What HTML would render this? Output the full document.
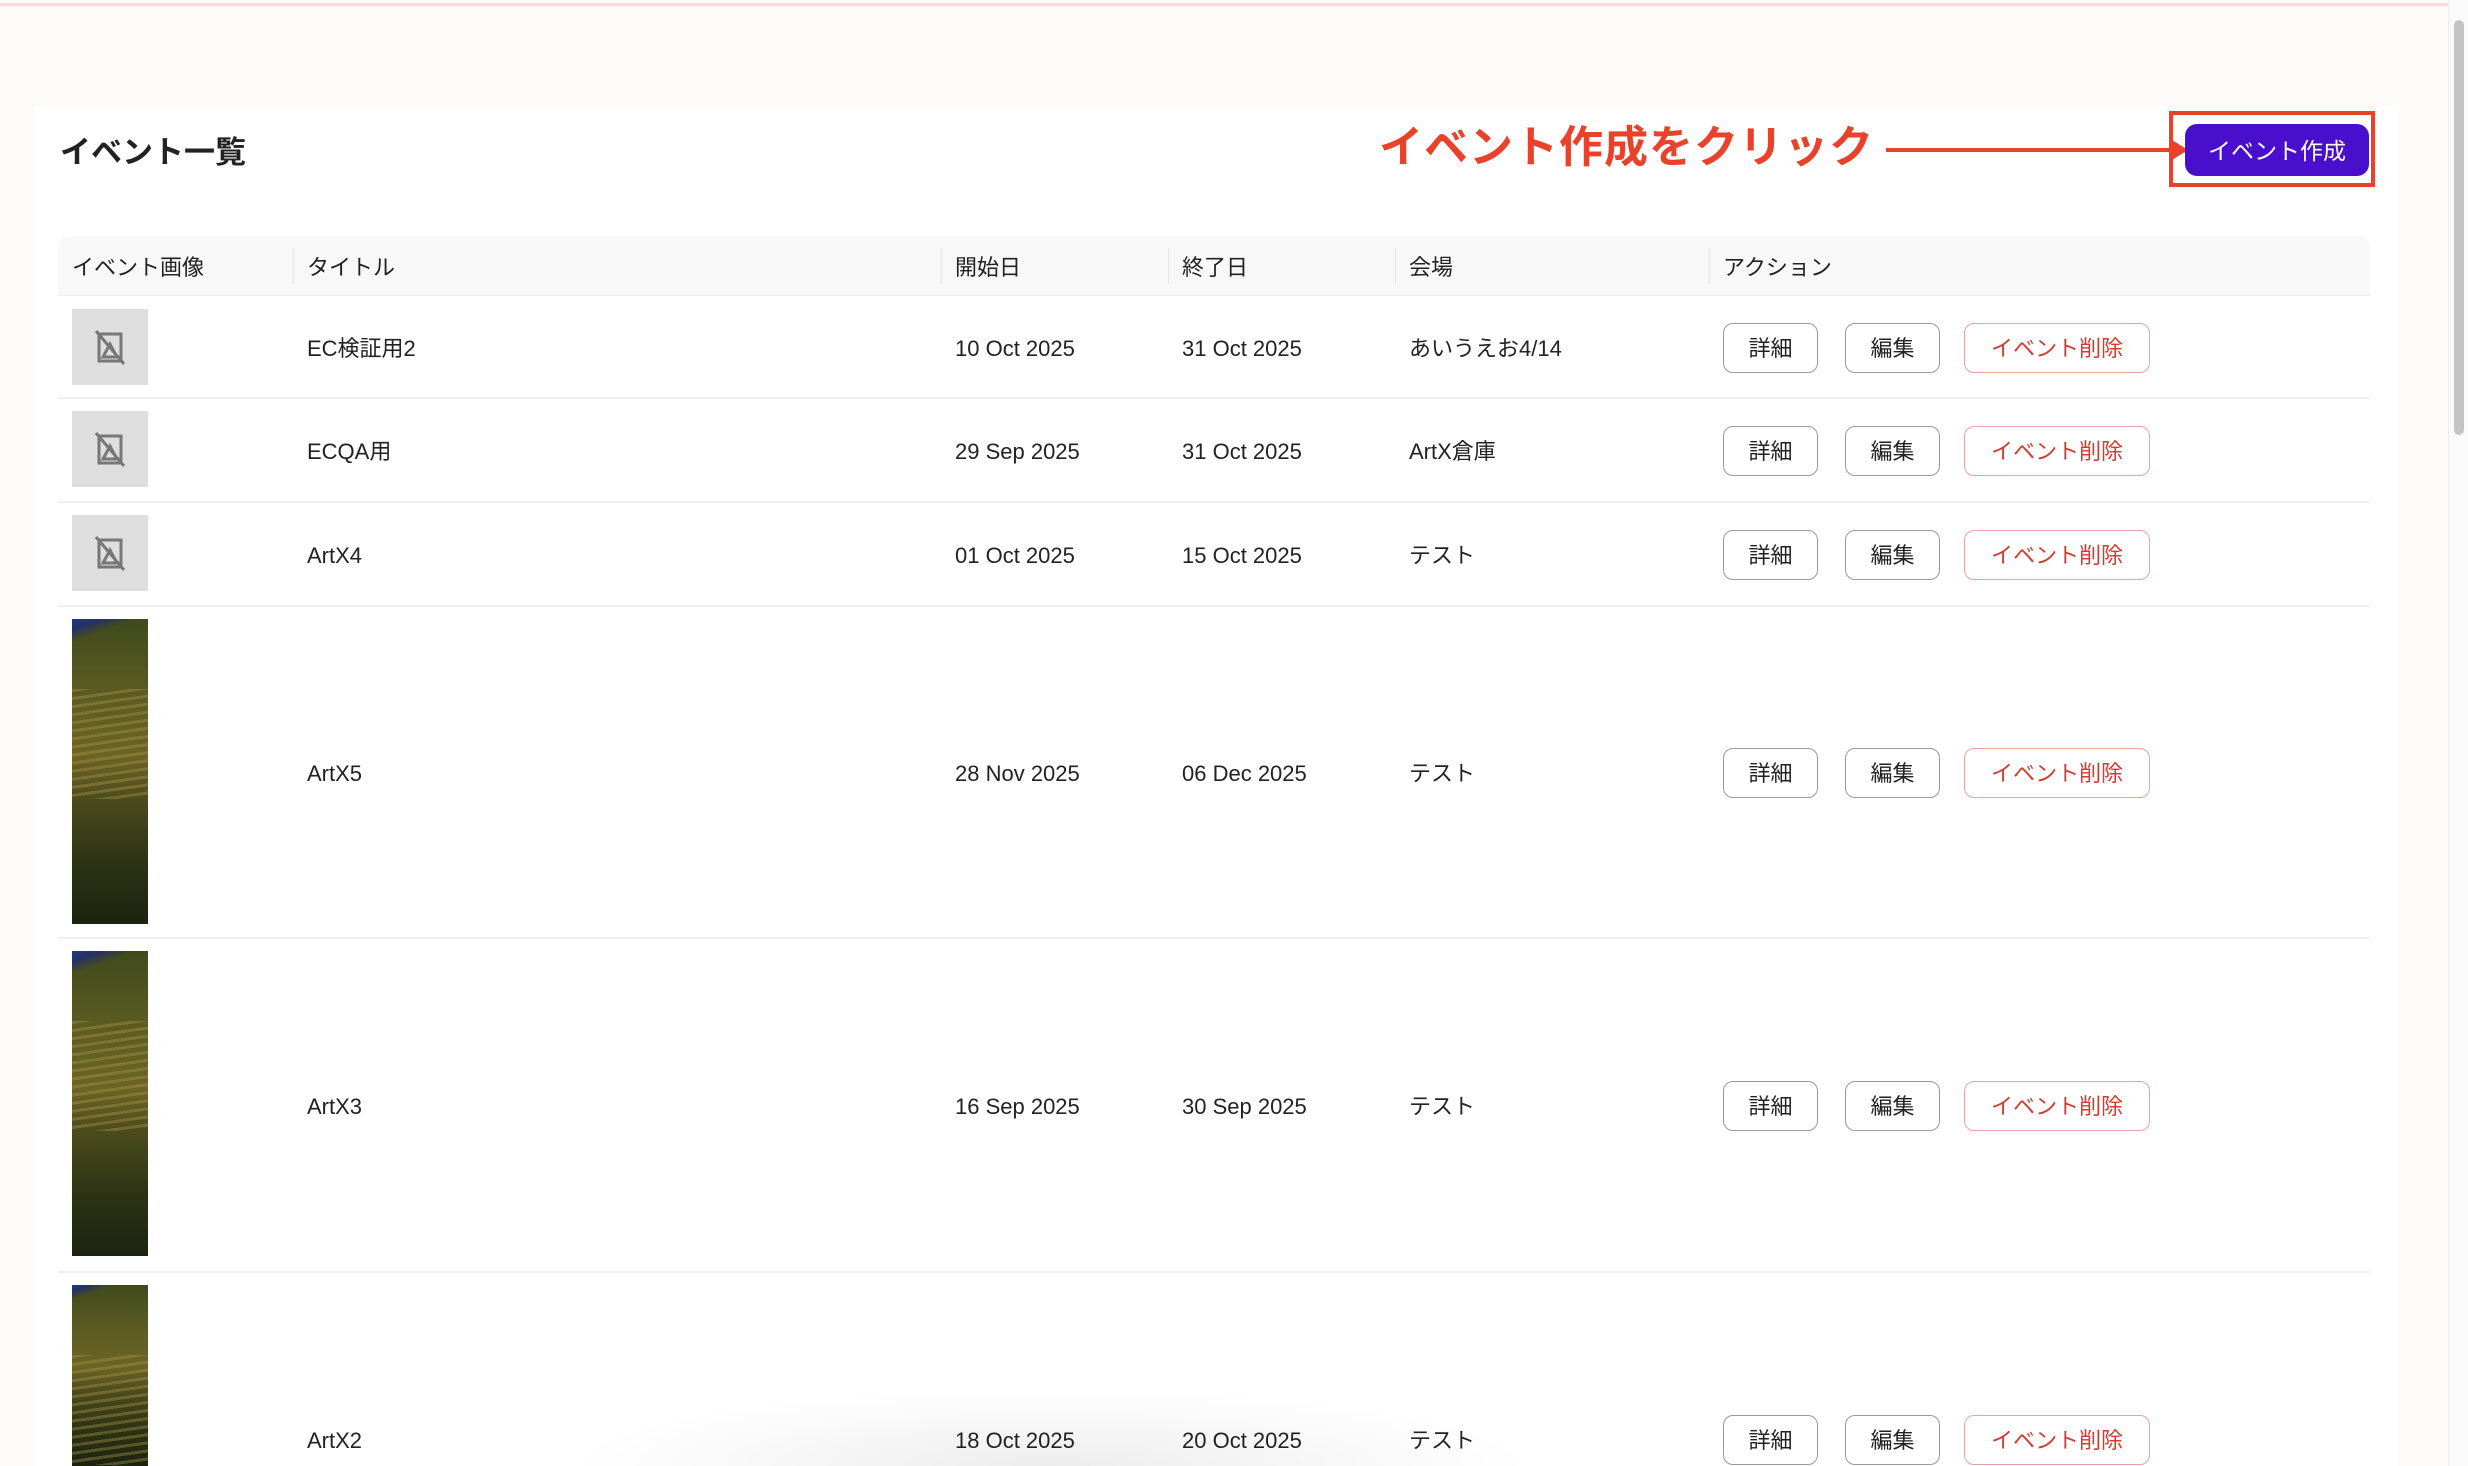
<!DOCTYPE html>
<html><head><meta charset="utf-8"><style>
*{margin:0;padding:0;box-sizing:border-box}
html,body{width:2468px;height:1466px;overflow:hidden}
body{background:#fdfcfa;font-family:"Liberation Sans","Noto Sans CJK JP",sans-serif;color:#222;position:relative}
.a{position:absolute}
#wrap{position:absolute;left:0;top:0;width:2468px;height:1466px;overflow:hidden}
.topline{left:0;top:3px;width:2448px;height:3px;background:#f6dada}
.card{left:35px;top:107px;width:2363px;height:1359px;background:#fff}
.sb{left:2448px;top:0;width:20px;height:1466px;background:#fafafa;border-left:1px solid #eee}
.thumbsb{left:2454px;top:20px;width:10px;height:415px;background:#c4c4c4;border-radius:5px}
.h1{left:60px;top:133px;font-size:31px;font-weight:bold;line-height:40px}
.ann{left:1379px;top:120px;font-size:44px;font-weight:bold;color:#e8432a;line-height:56px;letter-spacing:1px}
.line{left:1886px;top:148px;width:290px;height:4px;background:#e8432a}
.arrow{left:2172px;top:140px;width:0;height:0;border-top:10px solid transparent;border-bottom:10px solid transparent;border-left:16px solid #e8432a}
.box{left:2169px;top:111px;width:206px;height:76px;border:4px solid #e8432a}
.btn{left:2185px;top:124px;width:184px;height:52px;background:#4a0fcc;border-radius:12px;color:#fff;font-size:23px;text-align:center;line-height:54px}
.th{left:58px;top:236px;width:2312px;height:60px;background:#f8f8f8;border-radius:12px 12px 0 0;border-bottom:1px solid #ececec}
.ht{font-size:22px;top:252px;line-height:32px;color:#222}
.sep{top:248px;width:1px;height:36px;background:#e6e6e6}
.rl{left:58px;width:2312px;height:2px;background:#f0f0f0}
.c{font-size:22px;line-height:32px}
.ni{left:72px;width:76px;height:76px;background:#dedede}
.img{left:72px;width:76px;overflow:hidden;background:
linear-gradient(160deg,#1f3a80 0%,#26306a 3%,transparent 7%),
repeating-linear-gradient(172deg,rgba(170,150,70,.4) 0 3px,transparent 3px 8px) 0 70px/100% 110px no-repeat,
linear-gradient(180deg,#3f4a1c 0%,#5c5c22 25%,#6d6426 45%,#4a4a1c 60%,#2c3314 80%,#1c2410 100%)}
.b{height:50px;border:1.5px solid #999;border-radius:10px;font-size:22px;text-align:center;line-height:49px;background:#fff}
.d{border-color:#f0a0a0;color:#d43b2e}
.shadow{left:450px;top:1370px;width:1200px;height:96px;background:radial-gradient(ellipse 50% 100% at 50% 100%,rgba(0,0,0,.07),rgba(0,0,0,0) 80%)}
</style></head><body><div id="wrap">
<div class="a topline"></div>
<div class="a card"></div>
<div class="a sb"></div><div class="a thumbsb"></div>
<div class="a h1">イベント一覧</div>
<div class="a ann">イベント作成をクリック</div>
<div class="a line"></div><div class="a arrow"></div>
<div class="a box"></div>
<div class="a btn">イベント作成</div>
<div class="a th"></div>
<div class="a ht" style="left:72px">イベント画像</div>
<div class="a ht" style="left:307px">タイトル</div>
<div class="a ht" style="left:955px">開始日</div>
<div class="a ht" style="left:1182px">終了日</div>
<div class="a ht" style="left:1409px">会場</div>
<div class="a ht" style="left:1723px">アクション</div>
<div class="a sep" style="left:293px"></div><div class="a sep" style="left:941px"></div><div class="a sep" style="left:1168px"></div><div class="a sep" style="left:1395px"></div><div class="a sep" style="left:1709px"></div>
<div id="rows"></div>
<div class="a shadow"></div>
</div>
<script>
var rows=[[296,398,'EC検証用2','10 Oct 2025','31 Oct 2025','あいうえお4/14',0],
[398,502,'ECQA用','29 Sep 2025','31 Oct 2025','ArtX倉庫',0],
[502,606,'ArtX4','01 Oct 2025','15 Oct 2025','テスト',0],
[606,938,'ArtX5','28 Nov 2025','06 Dec 2025','テスト',1],
[938,1272,'ArtX3','16 Sep 2025','30 Sep 2025','テスト',1],
[1272,1606,'ArtX2','18 Oct 2025','20 Oct 2025','テスト',1]];
var h='';
var icon='<svg width="76" height="76" viewBox="0 0 76 76"><g fill="none" stroke="#777" stroke-width="3"><rect x="27" y="25" width="22" height="27"/><path d="M31 48l7-13 7 13z"/><path d="M24 22l28 33"/></g></svg>';
rows.forEach(function(r){
 var top=r[0],bot=r[1],mid=(top+bot)/2;
 if(r[6]){var it=top+13;var ih=Math.min(305,1466-it);h+='<div class="a img" style="top:'+it+'px;height:'+ih+'px"></div>';}
 else h+='<div class="a ni" style="top:'+(top+13)+'px">'+icon+'</div>';
 var ty=mid-14;
 h+='<div class="a c" style="left:307px;top:'+ty+'px">'+r[2]+'</div>';
 h+='<div class="a c" style="left:955px;top:'+ty+'px">'+r[3]+'</div>';
 h+='<div class="a c" style="left:1182px;top:'+ty+'px">'+r[4]+'</div>';
 h+='<div class="a c" style="left:1409px;top:'+ty+'px">'+r[5]+'</div>';
 var by=mid-24;
 h+='<div class="a b" style="left:1723px;top:'+by+'px;width:95px">詳細</div>';
 h+='<div class="a b" style="left:1845px;top:'+by+'px;width:95px">編集</div>';
 h+='<div class="a b d" style="left:1964px;top:'+by+'px;width:186px">イベント削除</div>';
 if(bot<1466) h+='<div class="a rl" style="top:'+(bot-1)+'px"></div>';
});
document.getElementById('rows').innerHTML=h;
</script>
</body></html>
